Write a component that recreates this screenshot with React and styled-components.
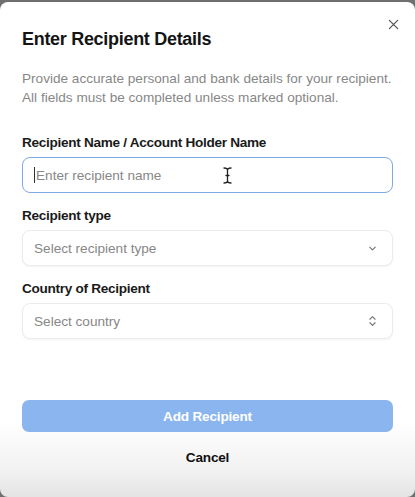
import React from "react";
import styled, { createGlobalStyle } from "styled-components";

const Global = createGlobalStyle`
  html, body { margin: 0; padding: 0; background: #6f6f6f; }
  body { font-family: "Liberation Sans", Arial, sans-serif; }
  * { box-sizing: border-box; }
`;

const Dialog = styled.div`
  position: relative;
  width: 415px;
  height: 495px;
  margin-top: 2px;
  border-radius: 8px;
  background: linear-gradient(to bottom, #ffffff 0px, #ffffff 420px, #f1f1f1 470px, #e4e4e4 495px);
  padding: 26px 22px 0 22px;
  display: flex;
  flex-direction: column;
`;

const Close = styled.button`
  position: absolute;
  top: 14px;
  right: 14px;
  width: 16px;
  height: 16px;
  padding: 0;
  border: none;
  background: none;
  display: flex;
  align-items: center;
  justify-content: center;
`;

const Title = styled.h2`
  margin: 0;
  font-size: 18px;
  line-height: 22px;
  font-weight: 700;
  color: #141414;
  letter-spacing: -0.3px;
`;

const Description = styled.p`
  margin: 18.5px 0 0 0;
  font-size: 13.6px;
  line-height: 19px;
  color: #878787;
`;

const Form = styled.div`
  margin-top: 28.5px;
  display: flex;
  flex-direction: column;
  gap: 15px;
`;

const Field = styled.div`
  display: flex;
  flex-direction: column;
  gap: 6px;
`;

const Label = styled.label`
  font-size: 13.6px;
  line-height: 16px;
  font-weight: 700;
  color: #1a1a1a;
  letter-spacing: -0.3px;
`;

const Box = styled.div`
  position: relative;
  height: 36px;
  border-radius: 8px;
  border: ${p => (p.$focused ? "1.5px solid #7ea9e3" : "1px solid #ebebeb")};
  box-shadow: ${p => (p.$focused ? "none" : "0 1px 2px rgba(0,0,0,0.05)")};
  background: #fff;
  display: flex;
  align-items: center;
  justify-content: space-between;
  padding: 0 14px 0 11px;
  font-size: 13.6px;
  color: #878787;
`;

const Caret = styled.span`
  display: inline-block;
  width: 1px;
  height: 16px;
  background: #333;
  margin-right: 1px;
`;

const Placeholder = styled.span`
  display: flex;
  align-items: center;
`;

const Cursor = styled.svg`
  position: absolute;
  left: 200px;
  top: 9px;
`;

const Actions = styled.div`
  margin-top: 61px;
  display: flex;
  flex-direction: column;
  align-items: stretch;
`;

const Primary = styled.button`
  height: 32px;
  border: none;
  border-radius: 7px;
  background: #8bb5ef;
  color: #fff;
  font-family: inherit;
  font-size: 13.6px;
  font-weight: 700;
  letter-spacing: -0.2px;
`;

const Secondary = styled.button`
  margin-top: 15px;
  border: none;
  background: none;
  font-family: inherit;
  font-size: 13.6px;
  font-weight: 700;
  color: #111;
  height: 20px;
  letter-spacing: -0.2px;
`;

const ChevronDown = () => (
  <svg width="11" height="11" viewBox="0 0 12 12" fill="none" stroke="#777" strokeWidth="1.3" strokeLinecap="round" strokeLinejoin="round">
    <path d="M3 4.5 L6 7.5 L9 4.5" />
  </svg>
);

const ChevronsUpDown = () => (
  <svg width="11" height="14" viewBox="0 0 12 16" fill="none" stroke="#777" strokeWidth="1.3" strokeLinecap="round" strokeLinejoin="round">
    <path d="M3 6 L6 3 L9 6" />
    <path d="M3 10 L6 13 L9 10" />
  </svg>
);

export default function App() {
  return (
    <>
      <Global />
      <Dialog>
        <Close aria-label="Close">
          <svg width="11" height="11" viewBox="0 0 12 12" stroke="#555" strokeWidth="1.4" strokeLinecap="round">
            <path d="M1.5 1.5 L10.5 10.5 M10.5 1.5 L1.5 10.5" />
          </svg>
        </Close>
        <Title>Enter Recipient Details</Title>
        <Description>
          Provide accurate personal and bank details for your recipient.
          <br />
          All fields must be completed unless marked optional.
        </Description>
        <Form>
          <Field>
            <Label>Recipient Name / Account Holder Name</Label>
            <Box $focused>
              <Placeholder>
                <Caret />
                Enter recipient name
              </Placeholder>
              <Cursor width="9" height="17" viewBox="0 0 9 17" fill="none" stroke="#222" strokeWidth="1.3" strokeLinecap="round">
                <path d="M1 1 Q4.5 1 4.5 3 L4.5 14 Q4.5 16 1 16 M8 1 Q4.5 1 4.5 3 M4.5 14 Q4.5 16 8 16 M3 8.5 L6 8.5" />
              </Cursor>
            </Box>
          </Field>
          <Field>
            <Label>Recipient type</Label>
            <Box>
              <span>Select recipient type</span>
              <ChevronDown />
            </Box>
          </Field>
          <Field>
            <Label>Country of Recipient</Label>
            <Box>
              <span>Select country</span>
              <ChevronsUpDown />
            </Box>
          </Field>
        </Form>
        <Actions>
          <Primary>Add Recipient</Primary>
          <Secondary>Cancel</Secondary>
        </Actions>
      </Dialog>
    </>
  );
}
